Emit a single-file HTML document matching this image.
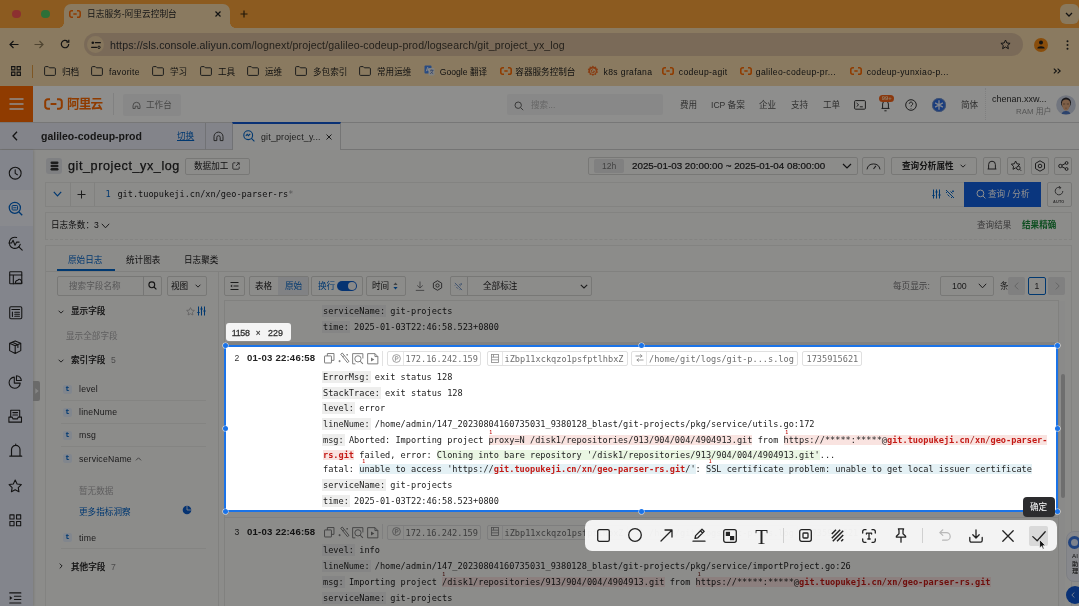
<!DOCTYPE html>
<html lang="zh-CN">
<head>
<meta charset="utf-8">
<title>日志服务-阿里云控制台</title>
<style>
*{box-sizing:border-box;margin:0;padding:0}
html,body{width:1079px;height:606px;overflow:hidden;background:#f9f9f6}
body{font-family:"Liberation Sans","Noto Sans CJK SC",sans-serif;font-size:8.6px;color:#222;position:relative;-webkit-font-smoothing:antialiased}
.a{position:absolute;white-space:nowrap}
.t{position:absolute;white-space:nowrap;line-height:12px;height:12px}
.mono{font-family:"DejaVu Sans Mono","Liberation Mono","Noto Sans CJK SC",monospace}
svg{position:absolute;overflow:visible}
.ic{fill:none;stroke:#222;stroke-width:1.2;stroke-linecap:round;stroke-linejoin:round}

/* ---------- browser chrome ---------- */
#tabstrip{left:0;top:0;width:1079px;height:28px;background:#f9a23a}
#tab{left:63.5px;top:4px;width:166.5px;height:24px;background:#f6daab;border-radius:7px 7px 0 0}
#urlrow{left:0;top:28px;width:1079px;height:32px;background:#f6daab}
#urlpill{left:84px;top:33px;width:939px;height:23px;border-radius:12px;background:#dabd9d}
#bmrow{left:0;top:60px;width:1079px;height:26px;background:#f6daab}
.bm{font-size:8.6px;color:#1d1d1d;top:65.5px}
.fold{top:66px;width:12px;height:10px}

/* ---------- aliyun header ---------- */
#alihdr{left:0;top:86px;width:1079px;height:36px;background:#fdfdfb}
#menu{left:0;top:86px;width:33px;height:36px;background:#ff6a00}
.nav{font-size:8.6px;color:#555;top:99.2px}
#projbar{left:0;top:122px;width:1079px;height:28px;background:#fbfbf9;border-top:1px solid #d4d4d4;border-bottom:1px solid #cfcfcf}
#projleft{left:0;top:123px;width:232px;height:26px;background:#eaecf6}
#ptab{left:232px;top:122px;width:109px;height:28px;background:#fcfcfa;border-top:2px solid #1058d0;border-left:1px solid #c9ccd1;border-right:1px solid #d0d0d0}

/* ---------- left rail ---------- */
#rail{left:0;top:150px;width:33px;height:456px;background:#eaedfa;box-shadow:1px 0 2px rgba(0,0,0,.12)}
#railact{left:0;top:190px;width:33px;height:36px;background:#f4f6fd}

/* ---------- main ---------- */
.panel{background:#faf9f7;border:1px solid #e9e9e6}
.btn{border:1px solid #d6d6d3;border-radius:2px;background:#faf9f7}
.blue{color:#0064c8}
.gray{color:#8a8a8a}

/* ---------- log ---------- */
.ln{position:absolute;left:323px;margin-top:.3px;white-space:pre;font-family:"DejaVu Sans Mono","Liberation Mono",monospace;font-size:8.61px;line-height:12px;height:12px;color:#222}
.k{background:#eeeeed;box-shadow:0 0 0 1px #eeeeed}
.hp{background:#f9e3e0}
.hg{background:#eaf6e3}
.hb{background:#e4f1f5}
.r{color:#c41a16;font-weight:bold}
.rs{color:#a8201a}
.chip{position:absolute;height:15px;top:0;border:1px solid #e0e0e0;border-radius:2px;font-family:"DejaVu Sans Mono","Liberation Mono",monospace;font-size:8.61px;line-height:13px;color:#666;white-space:pre}
.dim{background:rgba(0,0,0,.44)}
</style>
</head>
<body>
<div id="root" style="position:absolute;left:0;top:0;width:1079px;height:606px;overflow:hidden;will-change:transform">

<!-- ======== browser chrome ======== -->
<div class="a" id="tabstrip"></div>
<div class="a" style="left:12.300px;top:9.700px;width:8.600px;height:8.600px;border-radius:5px;background:#fa5656"></div>
<div class="a" style="left:41.200px;top:9.700px;width:8.600px;height:8.600px;border-radius:5px;background:#50c864"></div>
<div class="a" id="tab"></div>
<div class="a" style="left:57.500px;top:22px;width:6px;height:6px;background:radial-gradient(circle at 0 0,rgba(246,218,171,0) 5.700px,#f6daab 6.200px)"></div>
<div class="a" style="left:230px;top:22px;width:6px;height:6px;background:radial-gradient(circle at 100% 0,rgba(246,218,171,0) 5.700px,#f6daab 6.200px)"></div>
<svg style="left:69px;top:10px" width="12" height="8" viewBox="0 0 12 8"><path d="M4 .8H2.6A1.8 1.8 0 0 0 .8 2.6v2.8a1.8 1.8 0 0 0 1.8 1.8H4M8 .8h1.400A1.8 1.800 0 0 1 11.200 2.600v2.800a1.800 1.800 0 0 1-1.800 1.800H8M4.300 4h3.400" fill="none" stroke="#ff6a00" stroke-width="1.500"/></svg>
<div class="t" style="left:87px;top:8px;font-size:8.700px;color:#2a2a2a">日志服务-阿里云控制台</div>
<svg style="left:215px;top:11px" width="6" height="6" viewBox="0 0 6 6"><path d="M.5.5l5 5M5.500.5l-5 5" stroke="#222" stroke-width="1.200" fill="none"/></svg>
<svg style="left:240px;top:10px" width="8" height="8" viewBox="0 0 8 8"><path d="M4 .5v7M.5 4h7" stroke="#3a2a10" stroke-width="1.200" fill="none"/></svg>
<div class="a" style="left:1059.500px;top:4px;width:19px;height:20px;border-radius:6px;background:#f4d8a8"></div>
<svg style="left:1065px;top:11.500px" width="8" height="5" viewBox="0 0 8 5"><path d="M1 1l3 3 3-3" stroke="#222" stroke-width="1.300" fill="none"/></svg>

<div class="a" id="urlrow"></div>
<svg style="left:9px;top:40px" width="10" height="9" viewBox="0 0 10 9"><path d="M9.500 4.500H1M4.500 1L1 4.500 4.500 8" stroke="#222" stroke-width="1.200" fill="none"/></svg>
<svg style="left:34px;top:40px" width="10" height="9" viewBox="0 0 10 9"><path d="M.5 4.500H9M5.500 1L9 4.500 5.500 8" stroke="#8d7a58" stroke-width="1.200" fill="none"/></svg>
<svg style="left:60px;top:39px" width="10" height="10" viewBox="0 0 10 10"><path d="M8.700 5A3.700 3.700 0 1 1 7.600 2.400M8.800.8v2.400H6.400" stroke="#222" stroke-width="1.200" fill="none"/></svg>
<div class="a" id="urlpill"></div>
<div class="a" style="left:87px;top:36px;width:17px;height:17px;border-radius:9px;background:#efd3a6"></div>
<svg style="left:91px;top:41px" width="10" height="8" viewBox="0 0 10 8"><circle cx="1.800" cy="1.700" r="1.300" fill="#222"/><path d="M4.400 1.700h5M.6 6.300h5" stroke="#222" stroke-width="1.200" fill="none" stroke-linecap="round"/><circle cx="8" cy="6.300" r="1.200" fill="none" stroke="#222" stroke-width="1"/></svg>
<div class="t" id="url" style="left:110px;top:38.500px;font-size:10.600px;letter-spacing:.12px;color:#333">https://sls.console.aliyun.com<span style="color:#3f3a30">/lognext/project/galileo-codeup-prod/logsearch/git_project_yx_log</span></div>
<svg style="left:1000px;top:39px" width="11" height="11" viewBox="0 0 11 11"><path d="M5.500 1l1.400 3 3.200.3-2.400 2.200.7 3.200-2.900-1.700-2.900 1.700.7-3.200L.9 4.300l3.200-.3z" stroke="#222" stroke-width="1" fill="none" stroke-linejoin="round"/></svg>
<div class="a" style="left:1034px;top:37.500px;width:14px;height:14px;border-radius:7px;background:#f58a14"></div>
<svg style="left:1037px;top:40px" width="8" height="9" viewBox="0 0 8 9"><circle cx="4" cy="2.600" r="2" fill="#222"/><path d="M.3 8.500C.3 5.500 7.700 5.500 7.700 8.500z" fill="#222"/></svg>
<svg style="left:1066px;top:40px" width="3" height="10" viewBox="0 0 3 10"><circle cx="1.500" cy="1.200" r="1" fill="#222"/><circle cx="1.500" cy="5" r="1" fill="#222"/><circle cx="1.500" cy="8.800" r="1" fill="#222"/></svg>

<div class="a" id="bmrow"></div>
<svg style="left:11px;top:66px" width="10" height="10" viewBox="0 0 10 10"><path d="M.6.600h3.300v3.300H.6zM6.100.6h3.300v3.300H6.100zM.6 6.100h3.300v3.300H.6zM6.100 6.100h3.300v3.300H6.100z" stroke="#222" stroke-width="1.100" fill="none"/></svg>
<div class="a" style="left:32px;top:65px;width:1px;height:13px;background:#e09a40"></div>
<svg style="left:44px;top:66px" width="12" height="10" viewBox="0 0 12 10"><path d="M.6 1.600a1 1 0 0 1 1-1h2.600l1.200 1.200h5a1 1 0 0 1 1 1v5.600a1 1 0 0 1-1 1H1.600a1 1 0 0 1-1-1z" stroke="#333" stroke-width="1" fill="none"/></svg>
<div class="t bm" style="left:62px">归档</div>
<svg style="left:91px;top:66px" width="12" height="10" viewBox="0 0 12 10"><path d="M.6 1.600a1 1 0 0 1 1-1h2.600l1.200 1.200h5a1 1 0 0 1 1 1v5.600a1 1 0 0 1-1 1H1.600a1 1 0 0 1-1-1z" stroke="#333" stroke-width="1" fill="none"/></svg>
<div class="t bm" style="left:109px;letter-spacing:.35px">favorite</div>
<svg style="left:152px;top:66px" width="12" height="10" viewBox="0 0 12 10"><path d="M.6 1.600a1 1 0 0 1 1-1h2.600l1.200 1.200h5a1 1 0 0 1 1 1v5.600a1 1 0 0 1-1 1H1.600a1 1 0 0 1-1-1z" stroke="#333" stroke-width="1" fill="none"/></svg>
<div class="t bm" style="left:170px">学习</div>
<svg style="left:200px;top:66px" width="12" height="10" viewBox="0 0 12 10"><path d="M.6 1.600a1 1 0 0 1 1-1h2.600l1.200 1.200h5a1 1 0 0 1 1 1v5.600a1 1 0 0 1-1 1H1.600a1 1 0 0 1-1-1z" stroke="#333" stroke-width="1" fill="none"/></svg>
<div class="t bm" style="left:218px">工具</div>
<svg style="left:247px;top:66px" width="12" height="10" viewBox="0 0 12 10"><path d="M.6 1.600a1 1 0 0 1 1-1h2.600l1.200 1.200h5a1 1 0 0 1 1 1v5.600a1 1 0 0 1-1 1H1.600a1 1 0 0 1-1-1z" stroke="#333" stroke-width="1" fill="none"/></svg>
<div class="t bm" style="left:265px">运维</div>
<svg style="left:295px;top:66px" width="12" height="10" viewBox="0 0 12 10"><path d="M.6 1.600a1 1 0 0 1 1-1h2.600l1.200 1.200h5a1 1 0 0 1 1 1v5.600a1 1 0 0 1-1 1H1.600a1 1 0 0 1-1-1z" stroke="#333" stroke-width="1" fill="none"/></svg>
<div class="t bm" style="left:313px">多包索引</div>
<svg style="left:359px;top:66px" width="12" height="10" viewBox="0 0 12 10"><path d="M.6 1.600a1 1 0 0 1 1-1h2.600l1.200 1.200h5a1 1 0 0 1 1 1v5.600a1 1 0 0 1-1 1H1.600a1 1 0 0 1-1-1z" stroke="#333" stroke-width="1" fill="none"/></svg>
<div class="t bm" style="left:377px">常用运维</div>
<svg style="left:423.800px;top:65.300px" width="11" height="11" viewBox="0 0 11 11"><rect x=".5" y=".5" width="7" height="8" rx="1" fill="#4a86e8"/><rect x="4.500" y="3" width="6" height="7.500" rx="1" fill="#e6e6e6"/><path d="M2.200 6.300L3.700 2.300 5.200 6.300M2.700 5h2" stroke="#fff" stroke-width=".8" fill="none"/><path d="M6 5.300h3.500M7.700 4.500v.8M8.800 5.300c-.3 1.600-1.300 2.800-2.600 3.400M6.800 6.600c.5 1 1.300 1.700 2.400 2.100" stroke="#4a6fb5" stroke-width=".7" fill="none"/></svg>
<div class="t bm" style="left:439.8px">Google 翻译</div>
<svg style="left:499.5px;top:67px" width="12" height="8" viewBox="0 0 12 8"><path d="M4 .8H2.600A1.800 1.800 0 0 0 .8 2.600v2.800a1.800 1.800 0 0 0 1.800 1.800H4M8 .8h1.400A1.800 1.800 0 0 1 11.200 2.600v2.800a1.800 1.800 0 0 1-1.800 1.800H8M4.300 4h3.400" fill="none" stroke="#ff6a00" stroke-width="1.600"/></svg>
<div class="t bm" style="left:515.3px">容器服务控制台</div>
<svg style="left:587.200px;top:65px" width="11.800" height="11.800" viewBox="0 0 11 11"><path d="M5.500.5l1.200 1.300 1.700-.4.300 1.700 1.600.7-.8 1.500.8 1.600-1.600.6-.3 1.800-1.700-.5-1.200 1.400-1.200-1.400-1.700.5-.3-1.800-1.600-.6.800-1.600-.8-1.500 1.600-.7.300-1.700 1.700.4z" fill="#f26b21"/><circle cx="5.500" cy="5.800" r="2.600" fill="#f6daab"/><path d="M5.500 4.300a1.500 1.500 0 1 0 1.500 1.500H5.500" stroke="#f26b21" stroke-width=".9" fill="none"/></svg>
<div class="t bm" style="left:603.6px;letter-spacing:.35px">k8s grafana</div>
<svg style="left:662.2px;top:67px" width="12" height="8" viewBox="0 0 12 8"><path d="M4 .8H2.600A1.800 1.800 0 0 0 .8 2.600v2.800a1.800 1.800 0 0 0 1.800 1.800H4M8 .8h1.400A1.800 1.800 0 0 1 11.200 2.600v2.800a1.800 1.800 0 0 1-1.800 1.800H8M4.300 4h3.400" fill="none" stroke="#ff6a00" stroke-width="1.600"/></svg>
<div class="t bm" style="left:678.8px;letter-spacing:.35px">codeup-agit</div>
<svg style="left:740px;top:67px" width="12" height="8" viewBox="0 0 12 8"><path d="M4 .8H2.600A1.800 1.800 0 0 0 .8 2.600v2.800a1.800 1.800 0 0 0 1.800 1.800H4M8 .8h1.400A1.800 1.800 0 0 1 11.200 2.600v2.800a1.800 1.800 0 0 1-1.800 1.800H8M4.300 4h3.400" fill="none" stroke="#ff6a00" stroke-width="1.600"/></svg>
<div class="t bm" style="left:755.8px;letter-spacing:.35px">galileo-codeup-pr...</div>
<svg style="left:850.4px;top:67px" width="12" height="8" viewBox="0 0 12 8"><path d="M4 .8H2.600A1.800 1.800 0 0 0 .8 2.600v2.800a1.800 1.800 0 0 0 1.800 1.800H4M8 .8h1.400A1.800 1.800 0 0 1 11.200 2.600v2.800a1.800 1.800 0 0 1-1.800 1.800H8M4.300 4h3.400" fill="none" stroke="#ff6a00" stroke-width="1.600"/></svg>
<div class="t bm" style="left:866.7px;letter-spacing:.35px">codeup-yunxiao-p...</div>
<svg style="left:1053px;top:68px" width="8" height="6" viewBox="0 0 8 6"><path d="M.8.600L3.400 3 .8 5.400M4.600.6L7.200 3 4.600 5.400" stroke="#222" stroke-width="1.100" fill="none"/></svg>

<!-- ======== aliyun header ======== -->
<div class="a" id="alihdr"></div>
<div class="a" id="menu"></div>
<svg style="left:9px;top:98px" width="15" height="12" viewBox="0 0 15 12"><path d="M.5 1h14M.5 6h14M.5 11h14" stroke="#fff" stroke-width="1.400" fill="none"/></svg>
<svg style="left:44px;top:98px" width="19" height="12" viewBox="0 0 19 12"><path d="M6 1.200H3.800A2.600 2.600 0 0 0 1.200 3.800v4.400A2.600 2.600 0 0 0 3.800 10.800H6M13 1.200h2.200A2.600 2.600 0 0 1 17.800 3.800v4.400A2.600 2.600 0 0 1 15.200 10.800H13M6.600 6h5.800" fill="none" stroke="#ff6a00" stroke-width="2"/></svg>
<div class="t" id="logo" style="left:67px;top:96px;font-size:12.600px;line-height:16px;height:16px;font-weight:bold;color:#ff6a00;letter-spacing:-.9px">阿里云</div>
<div class="a" style="left:113px;top:93px;width:1px;height:22px;background:#e6e6e6"></div>
<div class="a" style="left:123px;top:94px;width:57.500px;height:21.500px;background:#f3f3f2;border-radius:2px"></div>
<svg style="left:132px;top:100.700px" width="9" height="9" viewBox="0 0 9 9"><path d="M1 4.800a3.500 3.500 0 1 1 7 0v2.700H5.800V5.200H3.200v2.300H1z" stroke="#777" stroke-width=".9" fill="none"/></svg>
<div class="t" style="left:146px;top:99.200px;font-size:8.600px;color:#808080">工作台</div>
<div class="a" style="left:507px;top:93.500px;width:155.500px;height:21px;background:#f3f3f2;border-radius:2px"></div>
<svg style="left:514px;top:100.700px" width="10" height="10" viewBox="0 0 10 10"><circle cx="4.200" cy="4.200" r="3.200" stroke="#666" stroke-width="1" fill="none"/><path d="M6.600 6.600l2.600 2.600" stroke="#666" stroke-width="1"/></svg>
<div class="t" style="left:531px;top:99.200px;font-size:8.600px;color:#b5b5b5">搜索...</div>
<div class="t nav" style="left:680px">费用</div>
<div class="t nav" style="left:711px">ICP 备案</div>
<div class="t nav" style="left:759px">企业</div>
<div class="t nav" style="left:791px">支持</div>
<div class="t nav" style="left:823px">工单</div>
<svg style="left:854px;top:99.500px" width="12" height="10" viewBox="0 0 12 10"><rect x=".6" y=".6" width="10.800" height="8.600" rx="1" stroke="#333" stroke-width="1" fill="none"/><path d="M2.600 3l2 1.800-2 1.800M5.800 6.800h3" stroke="#333" stroke-width="1" fill="none"/></svg>
<svg style="left:881px;top:99.500px" width="9" height="12" viewBox="0 0 9 12"><path d="M1.600 8.400V4a2.900 2.900 0 0 1 5.800 0v4.400M.5 8.400h8M3.400 10.800h2.200" stroke="#333" stroke-width="1" fill="none"/></svg>
<div class="a" style="left:879.400px;top:94.800px;width:14.600px;height:7.400px;border-radius:4px;background:#f7651a;color:#ffd9b0;font-size:5.800px;line-height:7.400px;text-align:center;font-weight:bold">99+</div>
<svg style="left:905px;top:98.500px" width="12" height="12" viewBox="0 0 12 12"><circle cx="6" cy="6" r="5.300" stroke="#333" stroke-width="1" fill="none"/><path d="M4.300 4.800a1.700 1.700 0 1 1 2.600 1.400c-.6.400-.9.700-.9 1.400M6 9v.6" stroke="#333" stroke-width="1" fill="none"/></svg>
<div class="a" style="left:932px;top:97.800px;width:14px;height:14px;border-radius:7px;background:#2b6be0"></div>
<svg style="left:932px;top:97.800px" width="14" height="14" viewBox="0 0 16 16"><path d="M8 2.500v11M3.500 5.500l9 5M12.500 5.500l-9 5" stroke="#e8eefc" stroke-width="1.500"/><circle cx="8" cy="8" r="7.400" fill="none" stroke="#9aa6bf" stroke-width=".8"/></svg>
<div class="t nav" style="left:961px">简体</div>
<div class="a" style="left:985px;top:88px;width:0;height:32px;border-left:1px dotted #e4e4e4"></div>
<div class="t" id="uname" style="left:992px;top:93px;font-size:9px;color:#333">chenan.xxw...</div>
<div class="t" style="left:1016px;top:106.300px;font-size:7.900px;color:#999">RAM 用户</div>
<svg style="left:1056px;top:95px" width="20" height="20" viewBox="0 0 20 20"><defs><clipPath id="avc"><circle cx="10" cy="10" r="9.800"/></clipPath></defs><circle cx="10" cy="10" r="9.800" fill="#ccd2e2"/><g clip-path="url(#avc)"><path d="M5.500 19.500c.5-3 2.500-3.600 4.500-3.600s4 .6 4.500 3.600z" fill="#4f78c2"/><ellipse cx="10" cy="7.800" rx="5" ry="5.400" fill="#2b2a30"/><path d="M5.900 8.200c0-2.400 1.600-3.600 4.100-3.600s4.100 1.200 4.100 3.600c0 3.800-1.600 7.400-4.100 7.400S5.900 12 5.900 8.200z" fill="#e2ab80"/><path d="M7 9h2.200M10.800 9H13" stroke="#6b4a3a" stroke-width=".7"/><path d="M9 13.200h2" stroke="#a8745a" stroke-width=".6"/></g></svg>

<div class="a" id="projbar"></div>
<div class="a" id="projleft"></div>
<svg style="left:12px;top:131px" width="6" height="10" viewBox="0 0 6 10"><path d="M5 .8L1 5l4 4.200" stroke="#222" stroke-width="1.300" fill="none"/></svg>
<div class="t" id="pname" style="left:41px;top:129.500px;font-size:10.500px;font-weight:bold;color:#2a2a2a">galileo-codeup-prod</div>
<div class="t" style="left:177px;top:130px;font-size:8.600px;color:#0064c8;text-decoration:underline">切换</div>
<div class="a" style="left:205px;top:123px;width:1px;height:27px;background:#c9ccd1"></div>
<svg style="left:213px;top:131px" width="11" height="11" viewBox="0 0 11 11"><path d="M1 5.600a4.500 4.500 0 1 1 9 0v4H7.200V6.400a1.700 1.700 0 0 0-3.400 0v3.200H1z" stroke="#444" stroke-width="1" fill="none"/></svg>
<div class="a" id="ptab"></div>
<svg style="left:243px;top:130px" width="12" height="12" viewBox="0 0 12 12"><circle cx="5.200" cy="5.200" r="4.400" stroke="#0064c8" stroke-width="1.100" fill="none"/><path d="M8.400 8.400l3 3M2.800 5.800l1.400-1.400 1.200 1.200 1.800-1.800" stroke="#0064c8" stroke-width="1.100" fill="none"/></svg>
<div class="t" id="ptabt" style="left:261px;top:130.500px;font-size:8.800px;letter-spacing:.2px;color:#333">git_project_y...</div>
<svg style="left:326px;top:134px" width="6" height="6" viewBox="0 0 6 6"><path d="M.5.500l5 5M5.500.5l-5 5" stroke="#333" stroke-width="1" fill="none"/></svg>

<!-- ======== left rail ======== -->
<div class="a" id="rail"></div>
<div class="a" id="railact"></div>
<svg style="left:7.6px;top:165.8px" width="14.4" height="14.4" viewBox="0 0 16 16"><circle cx="8" cy="8" r="6.600" class="ic"/><path d="M8 4.200V8.200l2.400 1.600" class="ic"/></svg>
<svg style="left:7.6px;top:200.8px" width="15.3" height="15.3" viewBox="0 0 17 17"><circle cx="7.600" cy="7.600" r="6.200" fill="none" stroke="#0064c8" stroke-width="1.400"/><path d="M12.200 12.200l3.600 3.600" stroke="#0064c8" stroke-width="1.500"/><rect x="4.600" y="5" width="6" height="5" rx=".8" fill="none" stroke="#0064c8" stroke-width="1.100"/><path d="M5.800 7.500h3.600" stroke="#0064c8" stroke-width="1"/></svg>
<svg style="left:7.6px;top:235.8px" width="15.3" height="15.3" viewBox="0 0 17 17"><path d="M13.600 9.200A6.200 6.200 0 1 1 9.600 1.700" class="ic"/><path d="M12 12l3.800 3.800" class="ic"/><path d="M1 7.800h3l1.600-3 2.200 5.400 1.800-3.400h2.800" class="ic"/></svg>
<svg style="left:8.6px;top:270.8px" width="13.5" height="13.5" viewBox="0 0 15 15"><rect x=".8" y=".8" width="13.400" height="13.400" rx=".6" class="ic"/><path d="M.8 4.400h13.400M4.800 4.400v9.800" class="ic"/><path d="M7 13.600c0-2 1.200-3.400 2.800-3.400.6-1.200 2.600-1.400 3.400 0 .8.600 1 2.200 1 3.400z" class="ic" stroke-width="1.100"/></svg>
<svg style="left:8.6px;top:305.8px" width="13.5" height="13.5" viewBox="0 0 15 15"><rect x=".8" y=".8" width="13.400" height="13.400" rx="1.400" class="ic"/><path d="M3.200 3.800h8.600" class="ic" stroke-width="1.800" stroke-linecap="butt"/><path d="M3.800 6.800v4.800" class="ic" stroke-width="1.500" stroke-linecap="butt"/><path d="M6.400 7h5.200M6.400 9.200h5.200M6.400 11.400h5.200" class="ic" stroke-width="1"/></svg>
<svg style="left:7.6px;top:339.8px" width="14.4" height="14.4" viewBox="0 0 16 16"><path d="M8 1l6.200 2.600v8.200L8 15l-6.200-3.200V3.600zM1.800 3.600L8 6.400l6.200-2.800M8 6.400V15M4.800 2.400l6.200 2.800v3" class="ic"/></svg>
<svg style="left:7.6px;top:374.8px" width="14.4" height="14.4" viewBox="0 0 16 16"><path d="M7 2.400A6.200 6.200 0 1 0 13.600 9H7z" class="ic"/><path d="M9.400.8a5.400 5.400 0 0 1 5.400 5.400H9.400z" class="ic"/></svg>
<svg style="left:7.6px;top:408.8px" width="14.4" height="14.4" viewBox="0 0 16 16"><path d="M3 9V1.400h10V9M1 9h3.600l1 2h4.800l1-2H15v5.600H1zM5.400 4h5.200M5.400 6.600h5.200" class="ic"/></svg>
<svg style="left:8.800px;top:443.200px" width="13.500" height="15" viewBox="0 0 14 15.500"><path d="M2.600 13.600V6.800a4.400 4.400 0 0 1 8.800 0v6.800M.8 13.600h12.400M7 2.400V1" class="ic" stroke-width="1.300"/></svg>
<svg style="left:7.6px;top:478.8px" width="14.4" height="14.4" viewBox="0 0 16 16"><path d="M8 1.200l2.100 4.400 4.700.6-3.400 3.300.8 4.700L8 12l-4.200 2.200.8-4.700L1.200 6.200l4.700-.6z" class="ic" stroke-width="1.300"/></svg>
<svg style="left:8.5px;top:513.7px" width="12.6" height="12.6" viewBox="0 0 14 14"><path d="M1 1h4.600v4.600H1zM8.400 1H13v4.600H8.400zM1 8.400h4.600V13H1zM8.400 8.400H13V13H8.400z" class="ic" stroke-width="1.700" stroke-linejoin="miter"/></svg>
<svg style="left:8.5px;top:591.6px" width="12.6" height="11.7" viewBox="0 0 14 13"><path d="M.8 1h12.400M6 4.800h7.200M6 8.400h7.200M.8 12.200h12.400" class="ic" stroke-width="1.300"/><path d="M.8 4.400l3 2.200-3 2.200z" fill="#222"/></svg>
<div class="a" style="left:33px;top:381px;width:7px;height:20px;background:#bdbdbd;border-radius:0 2px 2px 0"></div>
<svg style="left:35px;top:388px" width="4" height="6" viewBox="0 0 4 6"><path d="M.3.300L3.700 3 .3 5.700z" fill="#eee"/></svg>

<!-- ======== main ======== -->
<div id="main">
<!-- title row -->
<div class="a" style="left:46px;top:158px;width:16px;height:16px;border-radius:3px;background:#e3e4e8"></div>
<svg style="left:49.500px;top:161px" width="9" height="10" viewBox="0 0 9 10"><rect x=".5" y=".6" width="8" height="2.400" rx="1.200" fill="#333"/><rect x=".5" y="3.800" width="8" height="2.400" rx="1.200" fill="#333"/><rect x=".5" y="7" width="8" height="2.400" rx="1.200" fill="#333"/></svg>
<div class="t" id="title" style="left:68px;top:156px;font-size:12.600px;letter-spacing:.58px;-webkit-text-stroke:.25px #222;line-height:20px;height:20px;color:#222">git_project_yx_log</div>
<div class="a btn" style="left:185px;top:157.500px;width:65px;height:17.500px"></div>
<div class="t" style="left:194px;top:160px;font-size:8.600px;color:#222">数据加工</div>
<svg style="left:232px;top:162px" width="8" height="8" viewBox="0 0 8 8"><path d="M3.400.800H1.600a.8.800 0 0 0-.8.800v4.800a.8.800 0 0 0 .8.800h4.800a.8.800 0 0 0 .8-.8V4.600M4.800.800h2.400v2.400M7.200.8L4 4" stroke="#444" stroke-width=".9" fill="none"/></svg>

<div class="a btn" style="left:588px;top:157px;width:270px;height:17.500px"></div>
<div class="a" style="left:594px;top:159px;width:30px;height:13.500px;background:#e4e4e4;border-radius:2px"></div>
<div class="t" style="left:602px;top:160px;font-size:8.600px;color:#777">12h</div>
<div class="t" id="range" style="left:632px;top:159.500px;font-size:9.800px;color:#222;-webkit-text-stroke:.2px #222">2025-01-03 20:00:00 ~ 2025-01-04 08:00:00</div>
<svg style="left:842px;top:163px" width="10" height="6" viewBox="0 0 10 6"><path d="M1 1l4 4 4-4" stroke="#222" stroke-width="1.200" fill="none"/></svg>
<div class="a btn" style="left:862px;top:157px;width:23px;height:17.500px"></div>
<svg style="left:866px;top:161px" width="15" height="9" viewBox="0 0 15 9"><path d="M1 8.400A6.600 6.600 0 0 1 14 8.400" stroke="#333" stroke-width="1" fill="none"/><path d="M7.500 8l2.400-3.200" stroke="#333" stroke-width="1.100"/></svg>
<div class="a btn" style="left:891px;top:157px;width:86px;height:17.500px"></div>
<div class="t" style="left:902px;top:160px;font-size:8.600px;color:#222;font-weight:bold">查询分析属性</div>
<svg style="left:960px;top:164px" width="6" height="4" viewBox="0 0 8 5"><path d="M.8.800L4 4 7.200.8" stroke="#333" stroke-width="1.300" fill="none"/></svg>
<div class="a btn" style="left:983px;top:157px;width:18px;height:17.500px"></div>
<svg style="left:987px;top:160px" width="10" height="11" viewBox="0 0 10 11"><path d="M1.600 9V4.600a3.400 3.400 0 0 1 6.800 0V9M.6 9h8.800" stroke="#333" stroke-width="1" fill="none"/></svg>
<div class="a btn" style="left:1007px;top:157px;width:18px;height:17.500px"></div>
<svg style="left:1010px;top:160px" width="12" height="12" viewBox="0 0 12 12"><path d="M5.600 1l1.300 2.800 3 .4-2.200 2.100.5 3L5.600 7.900 3 9.300l.5-3L1.300 4.200l3-.4z" stroke="#333" stroke-width="1" fill="none" stroke-linejoin="round"/><circle cx="8.400" cy="8" r="1.800" stroke="#333" stroke-width=".9" fill="#faf9f7"/><path d="M9.700 9.300l1.500 1.500" stroke="#333" stroke-width=".9"/></svg>
<div class="a btn" style="left:1031px;top:157px;width:18px;height:17.500px"></div>
<svg style="left:1034px;top:160px" width="12" height="12" viewBox="0 0 12 12"><path d="M6 .8l4.500 2.600v5.200L6 11.200 1.500 8.600V3.400z" stroke="#333" stroke-width="1" fill="none" stroke-linejoin="round"/><circle cx="6" cy="6" r="1.800" stroke="#333" stroke-width="1" fill="none"/></svg>
<div class="a btn" style="left:1054px;top:157px;width:18px;height:17.500px"></div>
<svg style="left:1058px;top:161px" width="11" height="10" viewBox="0 0 11 10"><circle cx="2.400" cy="5" r="1.700" stroke="#333" stroke-width="1" fill="none"/><circle cx="8.600" cy="2" r="1.400" stroke="#333" stroke-width="1" fill="none"/><circle cx="8.600" cy="8" r="1.400" stroke="#333" stroke-width="1" fill="none"/><path d="M4 4.200l3.200-1.600M4 5.800l3.200 1.600" stroke="#333" stroke-width="1"/></svg>

<!-- query row -->
<div class="a panel" style="left:45px;top:182px;width:920px;height:24.500px"></div>
<div class="a" style="left:69.500px;top:182px;width:1px;height:24px;background:#e6e6e3"></div>
<div class="a" style="left:93.500px;top:182px;width:1px;height:24px;background:#e6e6e3"></div>
<svg style="left:53px;top:191px" width="9" height="6" viewBox="0 0 9 6"><path d="M.8.800L4.500 4.800 8.200.8" stroke="#0064c8" stroke-width="1.200" fill="none"/></svg>
<svg style="left:77px;top:189.500px" width="9" height="9" viewBox="0 0 9 9"><path d="M4.500.5v8M.5 4.500h8" stroke="#333" stroke-width="1" fill="none"/></svg>
<div class="t mono" style="left:105.500px;top:188px;font-size:8.610px;color:#0064c8">1</div>
<div class="t mono" id="query" style="left:117.400px;top:188px;font-size:8.610px;color:#222">git.tuopukeji.cn/xn/geo-parser-rs<span style="color:#999">*</span></div>
<svg style="left:932px;top:189px" width="9" height="10" viewBox="0 0 9 10"><path d="M1.500.5v9M4.500.5v9M7.500.5v9M.3 6.500h2.400M3.300 3h2.400M6.300 6h2.400" stroke="#0064c8" stroke-width="1" fill="none"/></svg>
<svg style="left:945px;top:189px" width="10" height="10" viewBox="0 0 10 10"><path d="M1 1l8 8M2.500 5.500l2 2M5.500 2.500l2 2M1 4l1-1M6 9l1-1M8 1.500v1.600M7.200 2.300h1.600" stroke="#0064c8" stroke-width="1" fill="none"/></svg>
<div class="a" style="left:964px;top:182px;width:77px;height:24.500px;background:#1260e0"></div>
<svg style="left:976px;top:189px" width="10" height="10" viewBox="0 0 10 10"><circle cx="4.400" cy="4.400" r="3.400" stroke="#fff" stroke-width="1" fill="none"/><path d="M7 7l2.400 2.400" stroke="#fff" stroke-width="1"/></svg>
<div class="t" style="left:988px;top:188px;font-size:8.600px;color:#fff">查询 / 分析</div>
<div class="a btn" style="left:1047px;top:182px;width:24.500px;height:24.500px"></div>
<svg style="left:1054px;top:186px" width="10" height="10" viewBox="0 0 10 10"><path d="M8.800 5A3.800 3.800 0 1 1 6.600 1.600M5 .3l1.800 1.300L5.400 3.200" stroke="#444" stroke-width=".9" fill="none"/></svg>
<div class="t" style="left:1053px;top:195.500px;font-size:3.800px;color:#555;font-weight:bold;letter-spacing:.2px">AUTO</div>

<!-- count row -->
<div class="a panel" style="left:45px;top:212px;width:1026.500px;height:27.500px;border-bottom-style:dashed"></div>
<div class="t" style="left:51px;top:219px;font-size:8.600px;color:#222">日志条数：3</div>
<svg style="left:101px;top:222.500px" width="9" height="6" viewBox="0 0 9 6"><path d="M.8.800L4.500 4.800 8.200.8" stroke="#333" stroke-width="1" fill="none"/></svg>
<div class="t" style="left:977px;top:219px;font-size:8.600px;color:#666">查询结果</div>
<div class="t" style="left:1022px;top:219px;font-size:8.600px;color:#1e8e3e;font-weight:bold">结果精确</div>

<!-- tabs panel -->
<div class="a panel" style="left:45px;top:245px;width:1026.500px;height:370px"></div>
<div class="a" style="left:46px;top:270.500px;width:1025px;height:1px;background:#e6e6e3"></div>
<div class="t blue" style="left:68px;top:253.800px;font-size:8.600px">原始日志</div>
<div class="t" style="left:126px;top:253.800px;font-size:8.600px">统计图表</div>
<div class="t" style="left:184px;top:253.800px;font-size:8.600px">日志聚类</div>
<div class="a" style="left:57px;top:269px;width:57.500px;height:2px;background:#0064c8"></div>
<div class="a" style="left:218px;top:271px;width:1px;height:340px;background:#e6e6e3"></div>

<!-- field search -->
<div class="a btn" style="left:57px;top:276px;width:105px;height:19.500px"></div>
<div class="a" style="left:143px;top:276px;width:1px;height:19px;background:#d2d2d0"></div>
<div class="t" style="left:69px;top:279.500px;font-size:8.600px;color:#9a9a9a">搜索字段名称</div>
<svg style="left:148px;top:281px" width="9" height="9" viewBox="0 0 9 9"><circle cx="3.800" cy="3.800" r="2.900" stroke="#222" stroke-width="1.100" fill="none"/><path d="M6 6l2.400 2.400" stroke="#222" stroke-width="1.100"/></svg>
<div class="a btn" style="left:167px;top:276px;width:39.500px;height:19.500px"></div>
<div class="t" style="left:171px;top:279.500px;font-size:8.600px;color:#222">视图</div>
<svg style="left:195px;top:284px" width="6" height="4" viewBox="0 0 8 5"><path d="M.8.800L4 4 7.200.8" stroke="#333" stroke-width="1.300" fill="none"/></svg>

<svg style="left:58px;top:309.5px" width="6" height="4" viewBox="0 0 8 5"><path d="M.8.800L4 4 7.200.8" stroke="#333" stroke-width="1.300" fill="none"/></svg>
<div class="t" style="left:71px;top:305px;font-size:8.600px;color:#222;font-weight:500;-webkit-text-stroke:.15px #222">显示字段</div>
<svg style="left:186px;top:306.500px" width="9" height="9" viewBox="0 0 9 9"><path d="M4.500.6l1.200 2.500 2.700.3-2 1.900.5 2.700-2.400-1.300-2.400 1.300.5-2.700-2-1.900 2.700-.3z" stroke="#aaa" stroke-width=".8" fill="none" stroke-linejoin="round"/></svg>
<svg style="left:197px;top:306px" width="9" height="10" viewBox="0 0 9 10"><path d="M1.500.5v9M4.500.5v9M7.500.5v9M.3 6.500h2.400M3.300 3h2.400M6.300 5h2.400" stroke="#0064c8" stroke-width="1" fill="none"/></svg>
<div class="t" style="left:66px;top:330px;font-size:8.600px;color:#aaa">显示全部字段</div>
<svg style="left:58px;top:358.5px" width="6" height="4" viewBox="0 0 8 5"><path d="M.8.800L4 4 7.200.8" stroke="#333" stroke-width="1.300" fill="none"/></svg>
<div class="t" style="left:71px;top:354px;font-size:8.600px;color:#222;font-weight:500;-webkit-text-stroke:.15px #222">索引字段</div>
<div class="t" style="left:111px;top:354px;font-size:8.600px;color:#888">5</div>
<div class="a" style="left:63px;top:384.5px;width:9px;height:9px;border-radius:2px;background:#e6effb"></div><div class="t" style="left:65.3px;top:382.5px;font-size:7.500px;color:#0064c8;font-weight:bold;font-family:'Liberation Mono',monospace">t</div>
<div class="t" style="left:79px;top:383px;font-size:8.700px;letter-spacing:.2px;color:#333">level</div>
<div class="a" style="left:61px;top:400px;width:145px;height:0;border-top:1px solid #ebebe8"></div>
<div class="a" style="left:63px;top:407.5px;width:9px;height:9px;border-radius:2px;background:#e6effb"></div><div class="t" style="left:65.3px;top:405.5px;font-size:7.500px;color:#0064c8;font-weight:bold;font-family:'Liberation Mono',monospace">t</div>
<div class="t" style="left:79px;top:406px;font-size:8.700px;letter-spacing:.2px;color:#333">lineNume</div>
<div class="a" style="left:61px;top:423px;width:145px;height:0;border-top:1px solid #ebebe8"></div>
<div class="a" style="left:63px;top:430.5px;width:9px;height:9px;border-radius:2px;background:#e6effb"></div><div class="t" style="left:65.3px;top:428.5px;font-size:7.500px;color:#0064c8;font-weight:bold;font-family:'Liberation Mono',monospace">t</div>
<div class="t" style="left:79px;top:429px;font-size:8.700px;letter-spacing:.2px;color:#333">msg</div>
<div class="a" style="left:61px;top:446px;width:145px;height:0;border-top:1px solid #ebebe8"></div>
<div class="a" style="left:63px;top:453.5px;width:9px;height:9px;border-radius:2px;background:#e6effb"></div><div class="t" style="left:65.3px;top:451.5px;font-size:7.500px;color:#0064c8;font-weight:bold;font-family:'Liberation Mono',monospace">t</div>
<div class="t" style="left:79px;top:452.5px;font-size:8.700px;letter-spacing:.2px;color:#333">serviceName</div>
<svg style="left:135px;top:456.500px" width="7" height="4" viewBox="0 0 8 5"><path d="M.8 4.200L4 1 7.200 4.200" stroke="#555" stroke-width="1" fill="none"/></svg>
<div class="t" style="left:79px;top:485px;font-size:8.600px;color:#aaa">暂无数据</div>
<div class="t" style="left:79px;top:505.5px;font-size:8.600px;color:#0064c8">更多指标洞察</div>
<svg style="left:182px;top:505px" width="10" height="10" viewBox="0 0 10 10"><circle cx="5" cy="5" r="4.300" fill="#0a5ccc"/><path d="M5 5V.700M5 5h4.300" stroke="#faf9f7" stroke-width=".8"/></svg>
<div class="a" style="left:63px;top:532.5px;width:9px;height:9px;border-radius:2px;background:#e6effb"></div><div class="t" style="left:65.3px;top:530.5px;font-size:7.500px;color:#0064c8;font-weight:bold;font-family:'Liberation Mono',monospace">t</div>
<div class="t" style="left:79px;top:532px;font-size:8.700px;letter-spacing:.2px;color:#333">time</div>
<div class="a" style="left:61px;top:548px;width:145px;height:0;border-top:1px solid #ebebe8"></div>
<svg style="left:59px;top:563px" width="4" height="6" viewBox="0 0 5 8"><path d="M.8.800L4 4 .8 7.200" stroke="#333" stroke-width="1.300" fill="none"/></svg>
<div class="t" style="left:71px;top:561px;font-size:8.600px;color:#222;font-weight:500;-webkit-text-stroke:.15px #222">其他字段</div>
<div class="t" style="left:111px;top:561px;font-size:8.600px;color:#888">7</div>
<div class="a btn" style="left:224px;top:276px;width:20.500px;height:19.500px"></div>
<svg style="left:230px;top:282px" width="9" height="8" viewBox="0 0 9 8"><path d="M.5.500h8M3.500 4h5M.5 7.500h8" stroke="#333" stroke-width="1" fill="none"/><path d="M2.200 2.600L.4 4l1.800 1.400z" fill="#333"/></svg>
<div class="a btn" style="left:249px;top:276px;width:59.500px;height:19.500px"></div>
<div class="a" style="left:278px;top:277px;width:30px;height:17.500px;background:#e6e8ec"></div>
<div class="t" style="left:255px;top:279.500px;font-size:8.600px;color:#222">表格</div>
<div class="t blue" style="left:285px;top:279.500px;font-size:8.600px">原始</div>
<div class="a btn" style="left:311px;top:276px;width:51.500px;height:19.500px"></div>
<div class="t blue" style="left:318px;top:279.500px;font-size:8.600px">换行</div>
<div class="a" style="left:337px;top:280.500px;width:20px;height:10.500px;border-radius:6px;background:#0a5ccc"></div>
<div class="a" style="left:347.500px;top:281.500px;width:8.500px;height:8.500px;border-radius:5px;background:#f4f4f4"></div>
<div class="a btn" style="left:366px;top:276px;width:39.500px;height:19.500px"></div>
<div class="t" style="left:372px;top:279.500px;font-size:8.600px;color:#222">时间</div>
<svg style="left:393px;top:282px" width="5" height="8" viewBox="0 0 5 8"><path d="M.4 3L2.500.6 4.600 3z" fill="#777"/><path d="M.4 5L2.500 7.400 4.600 5z" fill="#0064c8"/></svg>
<svg style="left:415px;top:280.500px" width="10" height="10" viewBox="0 0 10 10"><path d="M5 .500v6.500M2.200 4.400L5 7l2.800-2.600M.8 9.400h8.400" stroke="#777" stroke-width=".9" fill="none"/></svg>
<svg style="left:431.500px;top:280px" width="11" height="11" viewBox="0 0 12 12"><path d="M6 .8l4.500 2.600v5.200L6 11.200 1.500 8.600V3.400z" stroke="#444" stroke-width="1" fill="none" stroke-linejoin="round"/><circle cx="6" cy="6" r="1.800" stroke="#444" stroke-width="1" fill="none"/></svg>
<div class="a btn" style="left:450px;top:276px;width:142px;height:19.500px"></div>
<div class="a" style="left:466.500px;top:277px;width:1px;height:18px;background:#d2d2d0"></div>
<svg style="left:454px;top:281.500px" width="9" height="9" viewBox="0 0 10 10"><path d="M1 1l8 8M2.500 5.500l2 2M5.500 2.500l2 2M1 4l1-1M6 9l1-1M8 1.500v1.600M7.200 2.300h1.600" stroke="#6a8fc4" stroke-width="1" fill="none"/></svg>
<div class="t" style="left:483px;top:279.500px;font-size:8.600px;color:#222">全部标注</div>
<svg style="left:580px;top:283.500px" width="8" height="5" viewBox="0 0 8 5"><path d="M.8.800L4 4 7.200.8" stroke="#333" stroke-width="1.100" fill="none"/></svg>
<div class="t" style="left:893px;top:279.500px;font-size:8.600px;color:#777">每页显示:</div>
<div class="a btn" style="left:940px;top:276px;width:53.500px;height:19.500px"></div>
<div class="t" style="left:952px;top:279.500px;font-size:8.800px;color:#333">100</div>
<svg style="left:978px;top:283px" width="9" height="6" viewBox="0 0 9 6"><path d="M.8.800L4.500 4.800 8.200.8" stroke="#333" stroke-width="1" fill="none"/></svg>
<div class="t" style="left:1000px;top:279.500px;font-size:8.600px;color:#333">条</div>
<div class="a" style="left:1008px;top:277px;width:17px;height:17.500px;background:#e4e4e4;border-radius:2px"></div>
<svg style="left:1014px;top:282px" width="5" height="8" viewBox="0 0 5 8"><path d="M4.200.6L.8 4l3.400 3.400" stroke="#b4b4b4" stroke-width="1" fill="none"/></svg>
<div class="a" style="left:1028px;top:277px;width:17.500px;height:17.500px;border:1px solid #0064c8;border-radius:2px;background:#faf9f7"></div>
<div class="t" style="left:1034.500px;top:279.500px;font-size:8.600px;color:#333">1</div>
<div class="a" style="left:1048px;top:277px;width:17px;height:17.500px;background:#e4e4e4;border-radius:2px"></div>
<svg style="left:1054.500px;top:282px" width="5" height="8" viewBox="0 0 5 8"><path d="M.8.600L4.200 4 .8 7.400" stroke="#b4b4b4" stroke-width="1" fill="none"/></svg>
<div class="a" id="logbox" style="left:224px;top:300px;width:835px;height:310px;background:#f9f9f6;border:1px solid #e6e6e3"></div>
<div class="a" style="left:225px;top:345px;width:833px;height:167px;background:#fff"></div>
<div class="a" style="left:225px;top:342px;width:833px;height:3px;background:#e6e6e4"></div>
<div class="a" style="left:225px;top:512px;width:833px;height:5px;background:#f7f7f5"></div><div class="a" style="left:225px;top:517px;width:833px;height:1px;background:#e8e8e6"></div>
<div class="a" style="left:1059px;top:301px;width:6px;height:305px;background:#f6f6f4"></div>
<div class="a" style="left:1060.500px;top:374px;width:4.500px;height:124px;background:#c4c4c4;border-radius:2px"></div>
<div class="ln" style="top:305px"><span class="k">serviceName:</span> git-projects</div>
<div class="ln" style="top:321px"><span class="k">time:</span> 2025-01-03T22:46:58.523+0800</div>
<div class="t" style="left:234.500px;top:352px;font-size:8.600px;color:#333">2</div>
<div class="t" id="ts2" style="left:247px;top:352px;font-size:9.600px;letter-spacing:.2px;font-weight:bold;color:#222">01-03 22:46:58</div>
<svg style="left:324px;top:353.4px" width="10.500" height="10.500" viewBox="0 0 10 10"><rect x=".5" y="2.800" width="6.600" height="6.700" rx=".3" stroke="#777" stroke-width=".9" fill="none"/><path d="M3.200 2.800V.500h6.300v6.500H7.100" stroke="#777" stroke-width=".9" fill="none"/></svg>
<svg style="left:338px;top:352.8px" width="11.500" height="11.500" viewBox="0 0 11 11"><path d="M2.600 1.200l1.500-1.200 6.400 8-1.500 1.200z" stroke="#777" stroke-width=".9" fill="none" stroke-linejoin="round"/><path d="M4.600 3.700l1.500-1.200" stroke="#777" stroke-width=".8"/><path d="M1.500 6.800v2M.5 7.800h2M8.800 1v1.400M8.100 1.700h1.400" stroke="#777" stroke-width=".8" fill="none"/></svg>
<svg style="left:352px;top:352.8px" width="11.500" height="11.500" viewBox="0 0 11 11"><path d="M3.200 10.400H.6V.6h9.800v4.600" stroke="#777" stroke-width=".9" fill="none"/><circle cx="5.700" cy="5.600" r="3" stroke="#777" stroke-width=".9" fill="none"/><path d="M7.900 7.900l2.500 2.600" stroke="#777" stroke-width="1"/></svg>
<svg style="left:367px;top:352.8px" width="11.500" height="11.500" viewBox="0 0 11 11"><path d="M.6.600h7l2.800 2.800v7H.6zM7.600.6v2.800h2.800" stroke="#777" stroke-width=".9" fill="none"/><path d="M3.800 4.200v4l3.200-2z" fill="#777"/></svg>
<div class="a" style="left:382px;top:350.5px;width:1px;height:15px;background:#e2e2e2"></div>
<div class="chip" style="left:387px;top:351px;width:94px"></div><div class="a" style="left:403px;top:352px;width:1px;height:13px;background:#e6e6e6"></div>
<svg style="left:391.500px;top:353.5px" width="9" height="9" viewBox="0 0 9 9"><circle cx="4.500" cy="4.500" r="3.900" stroke="#888" stroke-width=".8" fill="none"/><path d="M3.400 6.800V2.600h1.500a1.200 1.200 0 0 1 0 2.400H3.400" stroke="#888" stroke-width=".8" fill="none"/></svg>
<div class="ln" style="left:405.500px;top:352.800px;color:#6e6e6e">172.16.242.159</div>
<div class="chip" style="left:487px;top:351px;width:141px"></div><div class="a" style="left:502px;top:352px;width:1px;height:13px;background:#e6e6e6"></div>
<svg style="left:490.500px;top:353.5px" width="8" height="9" viewBox="0 0 8 9"><rect x=".5" y=".5" width="7" height="8" stroke="#888" stroke-width=".8" fill="none"/><path d="M.5 3.200h7M.5 5.800h7M2.500.5v2.700" stroke="#888" stroke-width=".8"/></svg>
<div class="ln" style="left:504.500px;top:352.800px;color:#6e6e6e">iZbp11xckqzo1psfptlhbxZ</div>
<div class="chip" style="left:631px;top:351px;width:167px"></div><div class="a" style="left:646px;top:352px;width:1px;height:13px;background:#e6e6e6"></div>
<svg style="left:634.500px;top:354px" width="9" height="8" viewBox="0 0 9 8"><path d="M.5 2h6.500M5 .4L7.200 2 5 3.600M8.500 6H2M4 4.400L1.800 6 4 7.600" stroke="#888" stroke-width=".8" fill="none"/></svg>
<div class="ln" style="left:649px;top:352.800px;color:#6e6e6e">/home/git/logs/git-p...s.log</div>
<div class="chip" style="left:802px;top:351px;width:60px"></div>
<div class="ln" style="left:806.500px;top:352.800px;color:#6e6e6e">1735915621</div>
<div class="ln" style="top:370.5px"><span class="k">ErrorMsg:</span> exit status 128</div>
<div class="ln" style="top:386.3px"><span class="k">StackTrace:</span> exit status 128</div>
<div class="ln" style="top:402px"><span class="k">level:</span> error</div>
<div class="ln" style="top:417.8px"><span class="k">lineNume:</span> /home/admin/147_20230804160735031_9380128_blast/git-projects/pkg/service/utils.go:172</div>
<div class="ln" style="top:433.5px"><span class="k">msg:</span> Aborted: Importing project <span class="hp">proxy=N /disk1/repositories/913/904/004/4904913.git</span> from <span class="hp">https://*****:*****@<b class="r">git.tuopukeji.cn</b><span class="rs">/</span><b class="r">xn</b><span class="rs">/</span><b class="r">geo-parser-</b></span></div>
<div class="ln" style="top:448.5px"><span class="hp"><b class="r">rs.git</b></span> failed, error: <span class="hg">Cloning into bare repository '/disk1/repositories/913/904/004/4904913.git'</span>...</div>
<div class="ln" style="top:462.6px">fatal: <span class="hb">unable to access 'https://<b class="r">git.tuopukeji.cn</b><span class="rs">/</span><b class="r">xn</b><span class="rs">/</span><b class="r">geo-parser-rs.git</b>/'</span>: <span class="hb">SSL certificate problem: unable to get local issuer certificate</span></div>
<div class="ln" style="top:478.4px"><span class="k">serviceName:</span> git-projects</div>
<div class="ln" style="top:494.8px"><span class="k">time:</span> 2025-01-03T22:46:58.523+0800</div>
<div class="t" style="left:489.5px;top:429.5px;font-size:4.500px;line-height:5px;height:5px;color:#c41a16;font-weight:bold">1</div>
<div class="t" style="left:785.5px;top:429.5px;font-size:4.500px;line-height:5px;height:5px;color:#c41a16;font-weight:bold">1</div>
<div class="t" style="left:362.5px;top:459px;font-size:4.500px;line-height:5px;height:5px;color:#c41a16;font-weight:bold">1</div>
<div class="t" style="left:709px;top:459px;font-size:4.500px;line-height:5px;height:5px;color:#c41a16;font-weight:bold">1</div>
<div class="t" style="left:234.500px;top:525.75px;font-size:8.600px;color:#333">3</div>
<div class="t" style="left:247px;top:525.75px;font-size:9.600px;letter-spacing:.2px;font-weight:bold;color:#222">01-03 22:46:58</div>
<svg style="left:324px;top:527.15px" width="10.500" height="10.500" viewBox="0 0 10 10"><rect x=".5" y="2.800" width="6.600" height="6.700" rx=".3" stroke="#777" stroke-width=".9" fill="none"/><path d="M3.200 2.800V.500h6.300v6.500H7.100" stroke="#777" stroke-width=".9" fill="none"/></svg>
<svg style="left:338px;top:526.55px" width="11.500" height="11.500" viewBox="0 0 11 11"><path d="M2.600 1.200l1.500-1.200 6.400 8-1.500 1.200z" stroke="#777" stroke-width=".9" fill="none" stroke-linejoin="round"/><path d="M4.600 3.700l1.500-1.200" stroke="#777" stroke-width=".8"/><path d="M1.500 6.800v2M.5 7.800h2M8.800 1v1.400M8.100 1.700h1.400" stroke="#777" stroke-width=".8" fill="none"/></svg>
<svg style="left:352px;top:526.55px" width="11.500" height="11.500" viewBox="0 0 11 11"><path d="M3.200 10.400H.6V.6h9.800v4.600" stroke="#777" stroke-width=".9" fill="none"/><circle cx="5.700" cy="5.600" r="3" stroke="#777" stroke-width=".9" fill="none"/><path d="M7.900 7.900l2.500 2.600" stroke="#777" stroke-width="1"/></svg>
<svg style="left:367px;top:526.55px" width="11.500" height="11.500" viewBox="0 0 11 11"><path d="M.6.600h7l2.800 2.800v7H.6zM7.600.6v2.800h2.800" stroke="#777" stroke-width=".9" fill="none"/><path d="M3.800 4.200v4l3.200-2z" fill="#777"/></svg>
<div class="a" style="left:382px;top:524.25px;width:1px;height:15px;background:#e2e2e2"></div>
<div class="chip" style="left:387px;top:524.75px;width:94px"></div><div class="a" style="left:403px;top:525.75px;width:1px;height:13px;background:#e6e6e6"></div>
<svg style="left:391.500px;top:527.25px" width="9" height="9" viewBox="0 0 9 9"><circle cx="4.500" cy="4.500" r="3.900" stroke="#888" stroke-width=".8" fill="none"/><path d="M3.400 6.800V2.600h1.500a1.200 1.200 0 0 1 0 2.400H3.400" stroke="#888" stroke-width=".8" fill="none"/></svg>
<div class="ln" style="left:405.500px;top:526.55px;color:#6e6e6e">172.16.242.159</div>
<div class="chip" style="left:487px;top:524.75px;width:141px"></div><div class="a" style="left:502px;top:525.75px;width:1px;height:13px;background:#e6e6e6"></div>
<svg style="left:490.500px;top:527.25px" width="8" height="9" viewBox="0 0 8 9"><rect x=".5" y=".5" width="7" height="8" stroke="#888" stroke-width=".8" fill="none"/><path d="M.5 3.200h7M.5 5.800h7M2.500.5v2.700" stroke="#888" stroke-width=".8"/></svg>
<div class="ln" style="left:504.500px;top:526.55px;color:#6e6e6e">iZbp11xckqzo1psfptlhbxZ</div>
<div class="chip" style="left:631px;top:524.75px;width:167px"></div><div class="a" style="left:646px;top:525.75px;width:1px;height:13px;background:#e6e6e6"></div>
<svg style="left:634.500px;top:527.75px" width="9" height="8" viewBox="0 0 9 8"><path d="M.5 2h6.500M5 .4L7.200 2 5 3.600M8.500 6H2M4 4.400L1.800 6 4 7.600" stroke="#888" stroke-width=".8" fill="none"/></svg>
<div class="ln" style="left:649px;top:526.55px;color:#6e6e6e">/home/git/logs/git-p...s.log</div>
<div class="chip" style="left:802px;top:524.75px;width:60px"></div>
<div class="ln" style="left:806.500px;top:526.55px;color:#6e6e6e">1735915621</div>
<div class="ln" style="top:544.05px"><span class="k">level:</span> info</div>
<div class="ln" style="top:559.85px"><span class="k">lineNume:</span> /home/admin/147_20230804160735031_9380128_blast/git-projects/pkg/service/importProject.go:26</div>
<div class="ln" style="top:575.65px"><span class="k">msg:</span> Importing project <span class="hp">/disk1/repositories/913/904/004/4904913.git</span> from <span class="hp">https://*****:*****@<b class="r">git.tuopukeji.cn</b><span class="rs">/</span><b class="r">xn</b><span class="rs">/</span><b class="r">geo-parser-rs.git</b></span></div>
<div class="ln" style="top:591.45px"><span class="k">serviceName:</span> git-projects</div>
<div class="t" style="left:442.5px;top:571.75px;font-size:4.500px;line-height:5px;height:5px;color:#7a2a26;font-weight:bold">1</div>
<div class="t" style="left:698px;top:571.75px;font-size:4.500px;line-height:5px;height:5px;color:#7a2a26;font-weight:bold">1</div>
<div class="a" style="left:1065.500px;top:531px;width:20px;height:51px;border-radius:8px;background:#f1f3f9;border:1px solid #dfe2ea"></div>
<div class="a" style="left:1067.500px;top:535.500px;width:13px;height:13px;border-radius:7px;background:#3b78e0"></div>
<div class="a" style="left:1070.500px;top:538.500px;width:7px;height:7px;border-radius:4px;background:#dfe8fa"></div>
<div class="t" style="left:1072px;top:552px;font-size:6.200px;line-height:8px;height:8px;color:#222;font-weight:500">AI</div>
<div class="t" style="left:1072px;top:559.500px;font-size:6.200px;line-height:8px;height:8px;color:#222;font-weight:500">助</div>
<div class="t" style="left:1072px;top:567px;font-size:6.200px;line-height:8px;height:8px;color:#222;font-weight:500">理</div>
<div class="a" style="left:1065.500px;top:585.500px;width:18px;height:18px;border-radius:9px;background:#1058d0"></div>
<svg style="left:1070.500px;top:591.500px" width="4" height="6" viewBox="0 0 4 6"><path d="M3.400.500L.8 3l2.600 2.500" stroke="#cfe0ff" stroke-width="1" fill="none"/></svg>
</div>

<!-- ======== overlay ======== -->
<div id="ov">
<div class="a dim" style="left:0;top:0;width:1079px;height:346px"></div>
<div class="a dim" style="left:0;top:346px;width:225px;height:165px"></div>
<div class="a dim" style="left:1057px;top:346px;width:22px;height:165px"></div>
<div class="a dim" style="left:0;top:511px;width:1079px;height:95px"></div>
<!-- selection frame -->
<div class="a" style="left:224px;top:345px;width:834px;height:167px;border:2px solid #1a73e8"></div>
<div class="a" style="left:222.6px;top:343.3px;width:5.200px;height:5.200px;border-radius:3px;background:#1a73e8;box-shadow:0 0 0 .6px rgba(255,255,255,.75)"></div>
<div class="a" style="left:638.7px;top:343.3px;width:5.200px;height:5.200px;border-radius:3px;background:#1a73e8;box-shadow:0 0 0 .6px rgba(255,255,255,.75)"></div>
<div class="a" style="left:1054.6px;top:343.3px;width:5.200px;height:5.200px;border-radius:3px;background:#1a73e8;box-shadow:0 0 0 .6px rgba(255,255,255,.75)"></div>
<div class="a" style="left:222.6px;top:426.1px;width:5.200px;height:5.200px;border-radius:3px;background:#1a73e8;box-shadow:0 0 0 .6px rgba(255,255,255,.75)"></div>
<div class="a" style="left:1054.6px;top:426.1px;width:5.200px;height:5.200px;border-radius:3px;background:#1a73e8;box-shadow:0 0 0 .6px rgba(255,255,255,.75)"></div>
<div class="a" style="left:222.6px;top:508.8px;width:5.200px;height:5.200px;border-radius:3px;background:#1a73e8;box-shadow:0 0 0 .6px rgba(255,255,255,.75)"></div>
<div class="a" style="left:638.7px;top:508.8px;width:5.200px;height:5.200px;border-radius:3px;background:#1a73e8;box-shadow:0 0 0 .6px rgba(255,255,255,.75)"></div>
<div class="a" style="left:1054.6px;top:508.8px;width:5.200px;height:5.200px;border-radius:3px;background:#1a73e8;box-shadow:0 0 0 .6px rgba(255,255,255,.75)"></div>
<!-- size label -->
<div class="a" style="left:226px;top:323px;width:65px;height:18px;border-radius:3px;background:#f4f4f4"></div>
<div class="t" id="size" style="left:231.700px;top:326.500px;font-size:8.900px;color:#333;-webkit-text-stroke:.3px #333;letter-spacing:-.28px">1158</div>
<div class="t" style="left:255.800px;top:327.200px;font-size:8.400px;color:#333;-webkit-text-stroke:.2px #333">×</div>
<div class="t" style="left:268.100px;top:326.500px;font-size:8.900px;color:#333;-webkit-text-stroke:.3px #333">229</div>
<!-- tooltip -->
<div class="a" style="left:1023px;top:497px;width:31.500px;height:19.500px;border-radius:4px;background:#2c2c2e"></div>
<div class="t" style="left:1030px;top:500.500px;font-size:8.600px;color:#fff">确定</div>
<!-- toolbar -->
<div class="a" id="tbar" style="left:585px;top:520px;width:472px;height:31px;border-radius:7px;background:rgba(250,250,250,.94)"></div>
<svg style="left:597px;top:529px" width="13" height="13" viewBox="0 0 13 13"><rect x=".7" y=".7" width="11.600" height="11.600" rx="1.600" stroke="#222" stroke-width="1.300" fill="none" stroke-linecap="round" stroke-linejoin="round"/></svg>
<svg style="left:628px;top:528px" width="14" height="14" viewBox="0 0 14 14"><circle cx="7" cy="7" r="6.300" stroke="#222" stroke-width="1.300" fill="none" stroke-linecap="round" stroke-linejoin="round"/></svg>
<svg style="left:660px;top:529px" width="13" height="13" viewBox="0 0 13 13"><path d="M1 12L12 1M5 1h7v7" stroke="#222" stroke-width="1.300" fill="none" stroke-linecap="round" stroke-linejoin="round"/></svg>
<svg style="left:692px;top:528px" width="14" height="14" viewBox="0 0 14 14"><path d="M1 13.200h12M3 10.400l.6-2.800L10 1.200l2.200 2.200-6.400 6.400zM8.400 2.800l2.200 2.200" stroke="#222" stroke-width="1.300" fill="none" stroke-linecap="round" stroke-linejoin="round" stroke-width="1.200"/></svg>
<svg style="left:723px;top:528.500px" width="14" height="14" viewBox="0 0 14 14"><rect x=".7" y=".7" width="12.600" height="12.600" rx="2" stroke="#222" stroke-width="1.300" fill="none" stroke-linecap="round" stroke-linejoin="round"/><rect x="2.800" y="2.800" width="4.200" height="4.200" fill="#222"/><rect x="7" y="7" width="4.200" height="4.200" fill="#222"/></svg>
<div class="t" style="left:755.300px;top:525.700px;font-size:20.500px;line-height:22px;height:22px;font-family:'Liberation Serif',serif;color:#222">T</div>
<div class="a" style="left:783px;top:528px;width:1px;height:15px;background:#d0d0d0"></div>
<svg style="left:799px;top:529px" width="13" height="13" viewBox="0 0 13 13"><rect x=".7" y=".7" width="11.600" height="11.600" rx="2" stroke="#222" stroke-width="1.300" fill="none" stroke-linecap="round" stroke-linejoin="round"/><rect x="4" y="4" width="5" height="5" rx=".8" stroke="#222" stroke-width="1.300" fill="none" stroke-linecap="round" stroke-linejoin="round" stroke-width="1.100"/></svg>
<svg style="left:830.500px;top:529px" width="13" height="13" viewBox="0 0 13 13"><path d="M.8 5L5 .8M.8 9.200L9.200.8M1.800 12.200L12.200 1.800M6 12.200l6.200-6.200M10.200 12.200l2-2" stroke="#222" stroke-width="1.500" fill="none"/></svg>
<svg style="left:862px;top:528.500px" width="14" height="14" viewBox="0 0 14 14"><path d="M.7 4V2.400A1.700 1.700 0 0 1 2.400.7H4M10 .7h1.600a1.700 1.700 0 0 1 1.700 1.700V4M13.300 10v1.600a1.700 1.700 0 0 1-1.700 1.700H10M4 13.300H2.400A1.700 1.700 0 0 1 .7 11.600V10" stroke="#222" stroke-width="1.300" fill="none" stroke-linecap="round" stroke-linejoin="round"/><path d="M4.400 5V4.200h5.200V5M7 4.200v5.800M5.800 10h2.400" stroke="#222" stroke-width="1.300" fill="none" stroke-linecap="round" stroke-linejoin="round" stroke-width="1.100"/></svg>
<svg style="left:894.500px;top:528px" width="12" height="15" viewBox="0 0 12 15"><path d="M3.400.8h5.200l-.6 1.600v3.400l2.600 2.400v1H1.400v-1L4 5.800V2.400zM6 9.200v5" stroke="#222" stroke-width="1.300" fill="none" stroke-linecap="round" stroke-linejoin="round" stroke-width="1.200"/></svg>
<div class="a" style="left:921.500px;top:528px;width:1px;height:15px;background:#d0d0d0"></div>
<svg style="left:939px;top:529px" width="12" height="12" viewBox="0 0 12 12"><path d="M.8 3.600h6.600a3.800 3.800 0 0 1 0 7.600H3.600M3.800.8L.8 3.600l3 2.800" stroke="#b8b8b8" stroke-width="1.200" fill="none" stroke-linecap="round" stroke-linejoin="round"/></svg>
<svg style="left:968.500px;top:528.500px" width="14" height="14" viewBox="0 0 14 14"><path d="M7 .8v8M3.800 5.800L7 9l3.200-3.200M.8 8.400v3.200a1.600 1.600 0 0 0 1.600 1.600h9.200a1.600 1.600 0 0 0 1.600-1.600V8.400" stroke="#222" stroke-width="1.300" fill="none" stroke-linecap="round" stroke-linejoin="round"/></svg>
<svg style="left:1001.500px;top:529.500px" width="12" height="12" viewBox="0 0 12 12"><path d="M.8.800l10.400 10.400M11.200.8L.8 11.200" stroke="#222" stroke-width="1.300" fill="none" stroke-linecap="round" stroke-linejoin="round"/></svg>
<div class="a" style="left:1029px;top:526px;width:18.500px;height:19.500px;border-radius:2px;background:#d9d9d9"></div>
<svg style="left:1031.500px;top:530.500px" width="14" height="11" viewBox="0 0 14 11"><path d="M.8 5.600l4.400 4.200L13.200.8" stroke="#222" stroke-width="1.300" fill="none" stroke-linecap="round" stroke-linejoin="round"/></svg>
<svg style="left:1038.500px;top:538.500px" width="8" height="11" viewBox="0 0 8 11"><path d="M.6.600v8.400l2-1.800 1.300 3 1.300-.6-1.300-2.900h2.700z" fill="#111" stroke="#fff" stroke-width=".7" stroke-linejoin="round"/></svg>
</div>

</div>
</body>
</html>
